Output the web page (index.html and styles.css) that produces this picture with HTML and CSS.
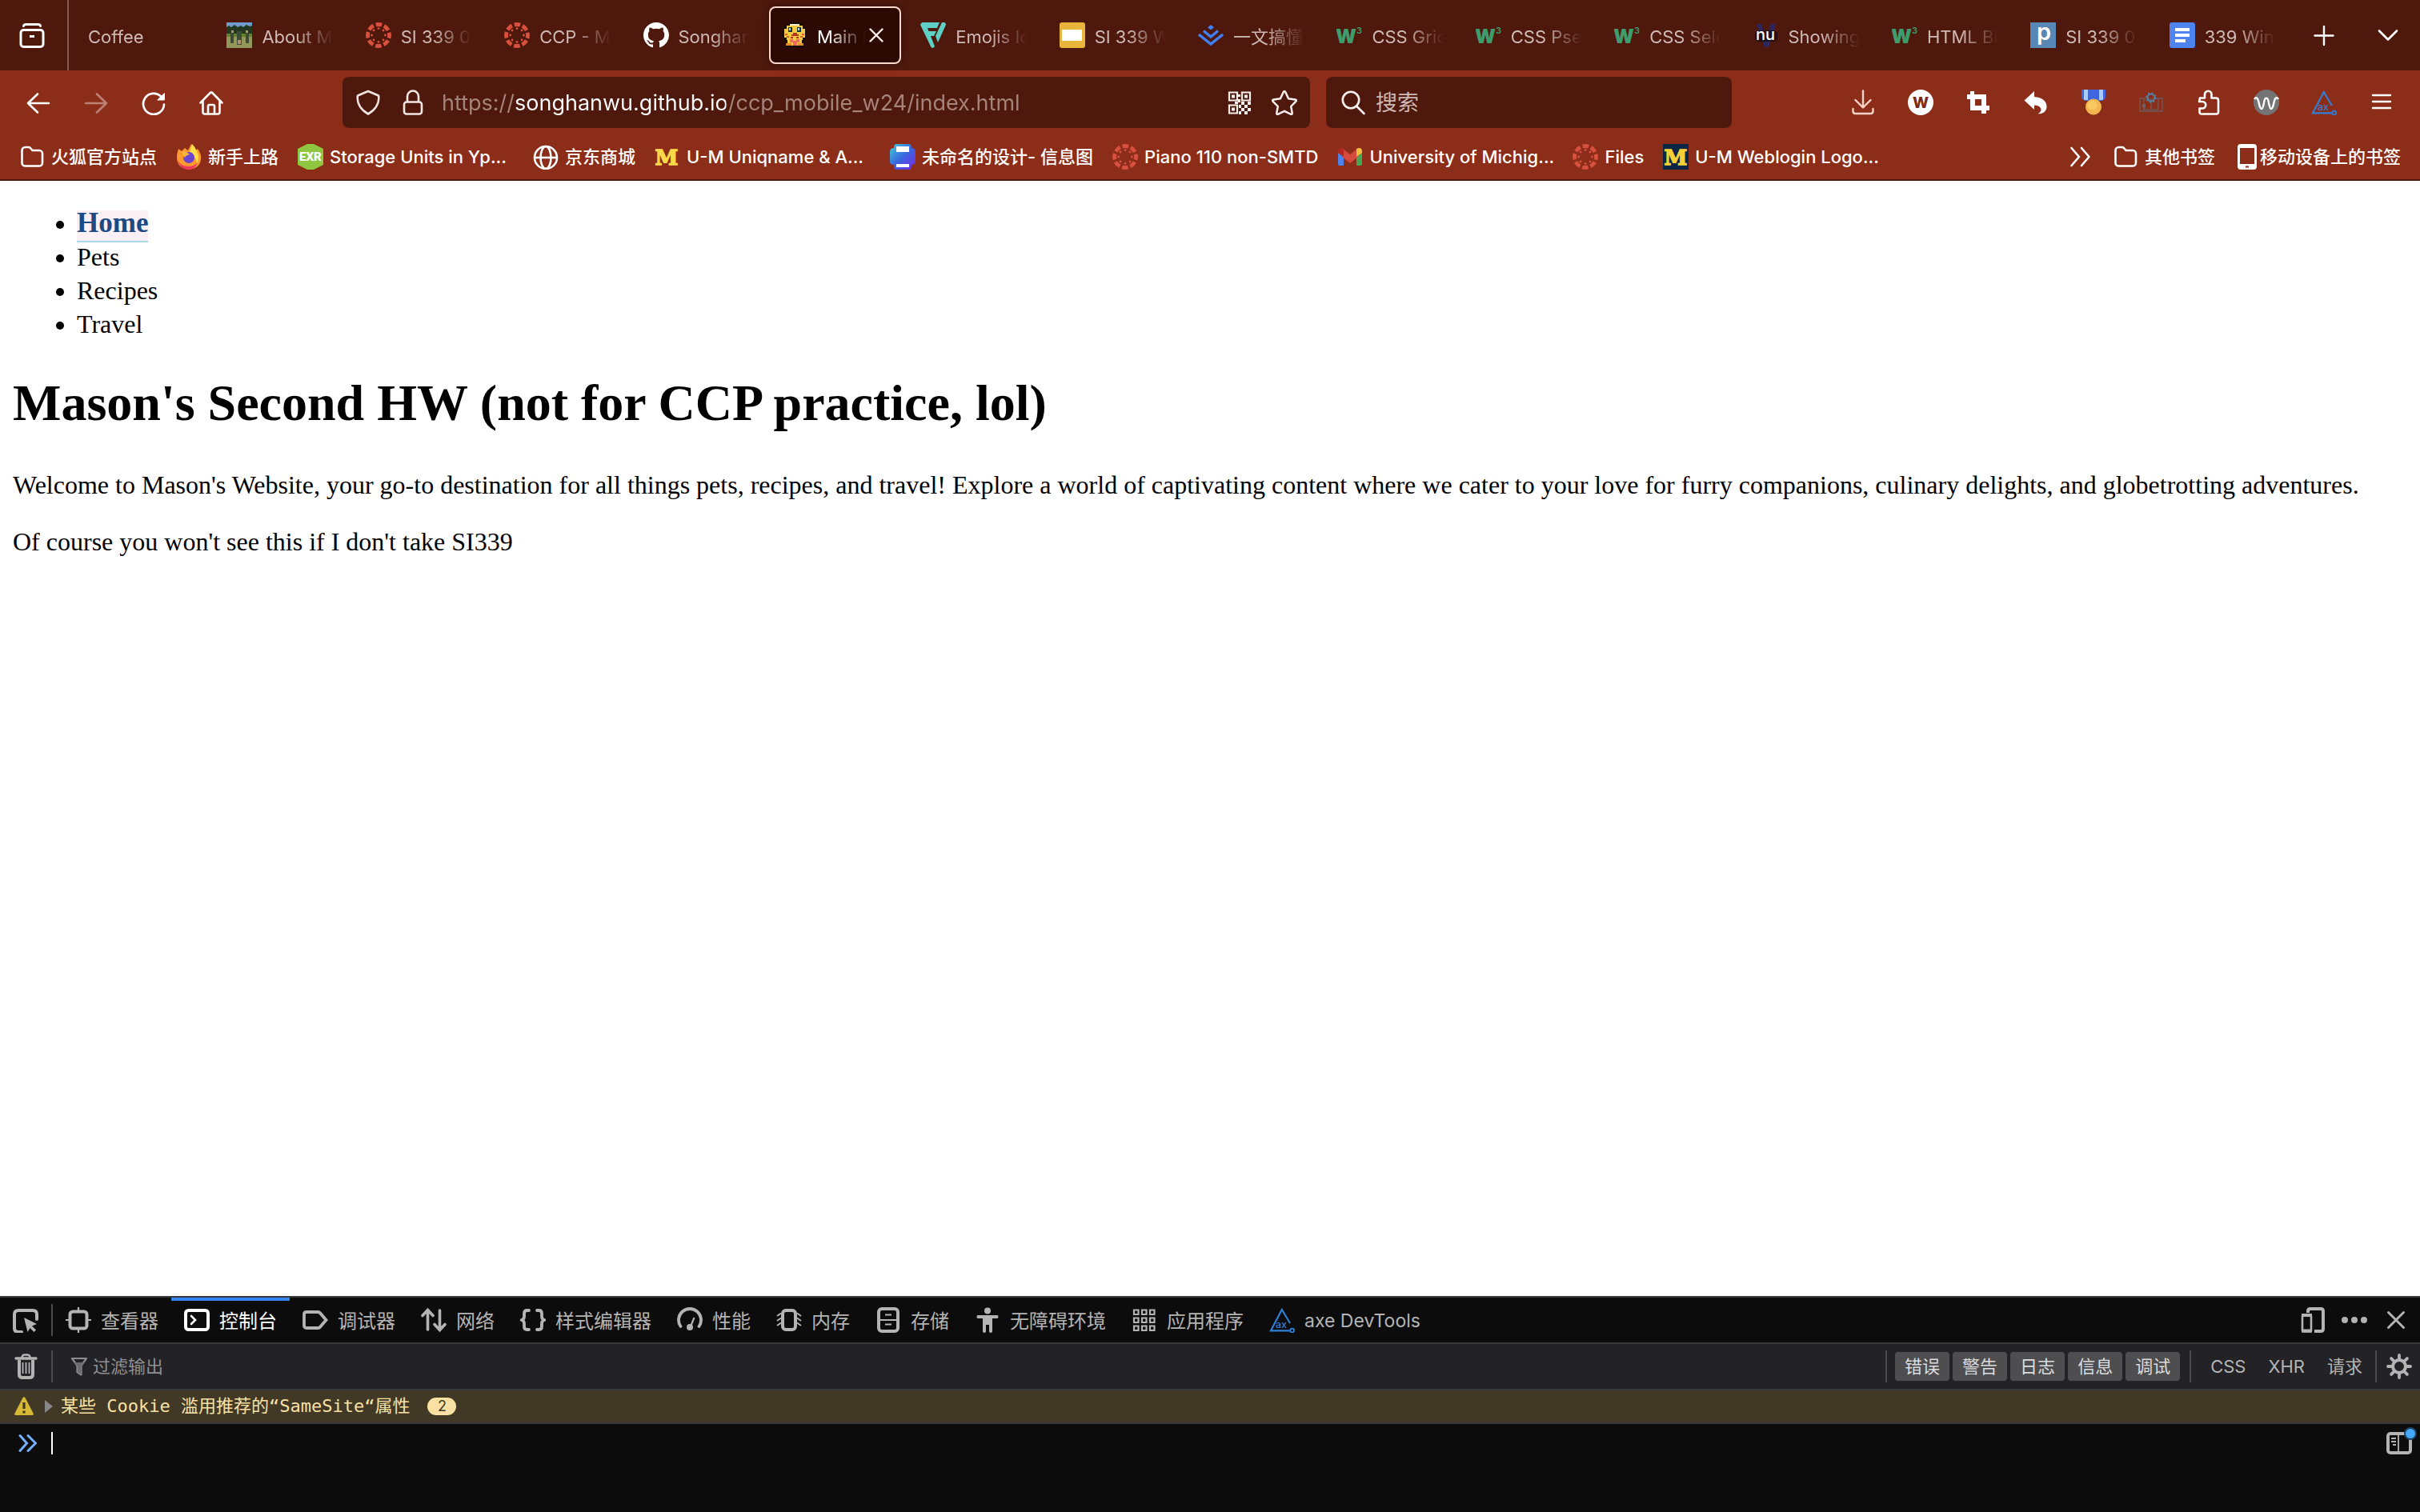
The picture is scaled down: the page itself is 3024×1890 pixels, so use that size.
FILE: index.html
```html
<!DOCTYPE html>
<html lang="zh-CN">
<head>
<meta charset="utf-8">
<meta name="viewport" content="width=device-width, initial-scale=1">
<title>Main</title>
<link rel="stylesheet" href="styles.css">
</head>
<body>
<svg class="sprite" aria-hidden="true">
  <symbol id="canvas" viewBox="0 0 32 32">
    <circle cx="16" cy="16" r="13.500" fill="none" stroke="#d9503f" stroke-width="4.800" stroke-dasharray="7.600 3" stroke-dashoffset="3.800"/>
    <g fill="#d9503f"><circle cx="16" cy="7.600" r="1.400"/><circle cx="16" cy="24.400" r="1.400"/><circle cx="7.600" cy="16" r="1.400"/><circle cx="24.400" cy="16" r="1.400"/><circle cx="22" cy="10" r="1.400"/><circle cx="10" cy="10" r="1.400"/><circle cx="22" cy="22" r="1.400"/><circle cx="10" cy="22" r="1.400"/></g>
  </symbol>
  <symbol id="w3" viewBox="0 0 32 32">
    <text x="-1" y="26" font-family="Inter, sans-serif" font-weight="900" font-size="24" fill="#3f9c6c">W</text>
    <text x="25" y="14" font-family="Inter, sans-serif" font-weight="600" font-size="11" fill="#3f9c6c">3</text>
  </symbol>
  <symbol id="folder" viewBox="0 0 32 32">
    <path d="M3.500 8a4 4 0 0 1 4-4h4.200a3 3 0 0 1 2.200 1l2.600 3h8.500a4 4 0 0 1 4 4v11.500a4 4 0 0 1-4 4h-17.500a4 4 0 0 1-4-4z" fill="none" stroke="#fff" stroke-width="2.600"/>
  </symbol>
  <symbol id="axe" viewBox="0 0 32 32">
    <path d="M26 20 15.800 3 2 29.300h24" fill="none" stroke="#2f7fd6" stroke-width="2.200"/>
    <circle cx="28.700" cy="29" r="2.400" fill="none" stroke="#2f7fd6" stroke-width="1.800"/>
    <text x="8" y="25.500" font-family="Inter, sans-serif" font-weight="500" font-size="12.500" fill="#2f7fd6">ax</text>
  </symbol>
  <symbol id="chevrons" viewBox="0 0 32 32">
    <path d="M4.500 5 14 16 4.500 27M17 5l9.500 11L17 27" fill="none" stroke="currentColor" stroke-width="2.600" stroke-linecap="round" stroke-linejoin="round"/>
  </symbol>
</svg>

<header class="browser">
  <div class="strip">
    <button class="strip-btn recent" type="button" aria-label="近期浏览">
      <svg class="icon" viewBox="0 0 32 32" fill="none" stroke="#fff" stroke-width="3" stroke-linecap="round"><path d="M5.500 4.500Q6 2.500 8.500 2.500h15q2.500 0 3 2"/><rect x="2" y="9.500" width="28" height="21" rx="3.500"/><path d="M13 17.500h6" stroke-linecap="butt"/></svg>
    </button>
    <nav class="tabs" aria-label="标签页">
      <button class="tab" type="button"><span class="tab-label">Coffee</span></button>
      <button class="tab" type="button">
        <svg class="icon" viewBox="0 0 32 32"><path fill="#6f9ccc" d="M0 0h32v7H0z"/><path fill="#24381f" d="M0 6l3-2 3 2 4-3 4 3 4-2 3 2 4-3 4 2 3-1v12H0z"/><path fill="#62822e" d="M0 14h32v6H0z"/><path fill="#93975a" d="M0 18h32v14H0z"/><path fill="#3c4a36" d="M5 13h4v13H5zM13 11h6v17h-6zM24 13h4v13h-4z"/><path fill="#ae9471" d="M14 22h4v5h-4zM6 10h3v3H6zM24 10h3v3h-3z"/></svg>
        <span class="tab-label">About M</span></button>
      <button class="tab" type="button"><svg class="icon"><use href="#canvas"/></svg><span class="tab-label">SI 339 0</span></button>
      <button class="tab" type="button"><svg class="icon"><use href="#canvas"/></svg><span class="tab-label">CCP - M</span></button>
      <button class="tab" type="button">
        <svg class="icon" viewBox="0 0 16 16"><path fill="#fff" d="M8 0C3.580 0 0 3.580 0 8c0 3.540 2.290 6.530 5.470 7.590.4.070.55-.17.55-.38 0-.19-.01-.82-.01-1.490-2.010.37-2.530-.49-2.690-.94-.09-.23-.48-.94-.82-1.130-.28-.15-.68-.52-.01-.53.63-.01 1.080.58 1.230.82.72 1.210 1.870.87 2.330.66.070-.52.28-.87.51-1.070-1.780-.2-3.640-.89-3.640-3.950 0-.87.31-1.590.82-2.150-.08-.2-.36-1.020.08-2.120 0 0 .67-.21 2.200.82.64-.18 1.320-.27 2-.27s1.360.09 2 .27c1.530-1.040 2.200-.82 2.200-.82.44 1.100.16 1.920.08 2.120.51.56.82 1.270.82 2.150 0 3.070-1.870 3.750-3.650 3.950.29.25.54.73.54 1.480 0 1.070-.01 1.930-.01 2.200 0 .21.15.46.55.38A8.010 8.010 0 0 0 16 8c0-4.420-3.580-8-8-8z"/></svg>
        <span class="tab-label">Songhan</span></button>
      <button class="tab active" type="button" aria-current="page">
        <svg class="icon" viewBox="0 0 32 32"><path fill="#120804" d="M10 0h12v2h4v3h3v4h2v10h-2v4h-1v8H4v-8H3v-4H1V9h2V5h3V2h4z"/><path fill="#f6c944" d="M10 2h12v2h4v4h3v11h-3v3H6v-3H3V8h3V4h4zM7 22h18v7H7z"/><path fill="#fff3d0" d="M10 2h12v2H10z"/><path fill="#16323a" d="M8 6h5v6H8zM19 6h5v6h-5z"/><path fill="#b5d8d8" d="M9 7h2v3H9zM20 7h2v3h-2z"/><path fill="#e05a2c" d="M4 14h3v2H4zM25 14h3v2h-3zM6 17h3v2H6zM23 17h3v2h-3z"/><path fill="#b8321c" d="M14 13h5v2h2v2h-9v-2h2zM11 18h3v2h-3zM18 18h3v2h-3z"/><path fill="#f06a5c" d="M10 21h4v2h4v-2h4v4h-3v4h-5v-4h-4z"/><path fill="#e88a25" d="M5 26h7v3H5zM20 26h7v3h-7z"/></svg>
        <span class="tab-label">Main P</span>
        <svg class="close" viewBox="0 0 18 18"><path d="M1.500 1.500l15 15m0-15l-15 15" stroke="#fdeee9" stroke-width="2.400" stroke-linecap="round"/></svg>
      </button>
      <button class="tab" type="button"><svg class="icon" viewBox="0 0 32 32"><path fill="#5fd0c6" d="M2 0h22L21 7H9l1.500 4H20l-3 6h-4l5 13q-3 4-5 0L0 3zM27 0h3q3 1 1.500 4L22 25l-3-8z"/></svg><span class="tab-label">Emojis Ic</span></button>
      <button class="tab" type="button"><svg class="icon" viewBox="0 0 32 32"><rect width="32" height="32" rx="3" fill="#e8b43c"/><rect x="3" y="9" width="25" height="14" fill="#fff"/></svg><span class="tab-label">SI 339 W</span></button>
      <button class="tab" type="button"><svg class="icon" viewBox="0 0 32 32" fill="none" stroke="#3f80f6" stroke-width="3.400"><path d="M1 15l15 12 15-12M7 10.500l9 7.500 9-7.500"/><path fill="#3f80f6" stroke="none" d="M16 3l4 3.200-4 3.300-4-3.300z"/></svg><span class="tab-label">一文搞懂</span></button>
      <button class="tab" type="button"><svg class="icon"><use href="#w3"/></svg><span class="tab-label">CSS Grid</span></button>
      <button class="tab" type="button"><svg class="icon"><use href="#w3"/></svg><span class="tab-label">CSS Pse</span></button>
      <button class="tab" type="button"><svg class="icon"><use href="#w3"/></svg><span class="tab-label">CSS Sele</span></button>
      <button class="tab" type="button"><svg class="icon" viewBox="0 0 32 32"><path fill="#2b2560" d="M4 2h6l6 18 6-18h6L19 31h-5z"/><rect x="2" y="10" width="28" height="14" rx="5" fill="#1a0d10" opacity=".8"/><text x="3" y="22" font-family="Inter, sans-serif" font-weight="500" font-size="20" fill="#fff">nu</text></svg><span class="tab-label">Showing</span></button>
      <button class="tab" type="button"><svg class="icon"><use href="#w3"/></svg><span class="tab-label">HTML Bl</span></button>
      <button class="tab" type="button"><svg class="icon" viewBox="0 0 32 32"><rect width="32" height="32" fill="#5787b5"/><text x="8" y="22" font-family="Inter, sans-serif" font-weight="600" font-size="29" fill="#fff">p</text></svg><span class="tab-label">SI 339 0</span></button>
      <button class="tab" type="button"><svg class="icon" viewBox="0 0 32 32"><rect width="32" height="32" rx="3" fill="#4f83ee"/><path d="M7 9h18M7 16h18M7 23h13" stroke="#fff" stroke-width="4"/></svg><span class="tab-label">339 Win</span></button>
    </nav>
    <button class="strip-btn" type="button" aria-label="打开新标签页"><svg class="icon" viewBox="0 0 32 32"><path d="M16 5v23M4.500 16.500h23" stroke="#fff" stroke-width="2.400" stroke-linecap="round"/></svg></button>
    <button class="strip-btn" type="button" aria-label="列出标签页"><svg class="icon" viewBox="0 0 32 32"><path d="M5 10.500l11 11 11-11" fill="none" stroke="#fff" stroke-width="2.600" stroke-linecap="round" stroke-linejoin="round"/></svg></button>
  </div>

  <div class="toolbar">
    <div class="tools">
      <button type="button" class="tool" aria-label="后退"><svg class="icon" viewBox="0 0 32 32"><path d="M29 17H3M15 5.500 3 17l12 11.500" fill="none" stroke="#fff" stroke-width="2.600" stroke-linecap="round" stroke-linejoin="round"/></svg></button>
      <button type="button" class="tool dim" aria-label="前进"><svg class="icon" viewBox="0 0 32 32"><path d="M3 17h26M17 5.500 29 17 17 28.500" fill="none" stroke="#fff" stroke-width="2.600" stroke-linecap="round" stroke-linejoin="round"/></svg></button>
      <button type="button" class="tool" aria-label="刷新"><svg class="icon" viewBox="0 0 32 32"><path d="M25.500 9A13 13 0 1 0 29 18.500" fill="none" stroke="#fff" stroke-width="2.700" stroke-linecap="round"/><path fill="#fff" d="M29 4.500q1-.5 1 .8V12q0 1.500-1.500 1.500h-7.200q-1.500 0-.6-1z"/></svg></button>
      <button type="button" class="tool" aria-label="主页"><svg class="icon" viewBox="0 0 32 32"><path d="M2.500 16.500 14.700 4q1.300-1.200 2.600 0l12.200 12.500M5.500 14v14q0 2.500 2.500 2.500h16q2.500 0 2.500-2.500V14M12 30V21q0-2 2-2h4q2 0 2 2v9" fill="none" stroke="#fff" stroke-width="2.600" stroke-linecap="round"/></svg></button>
    </div>
    <div class="field address">
      <svg class="icon" viewBox="0 0 32 32"><path d="M16 2l13 5.500c1.500 9-3.500 17.500-13 23C6.500 25 1.500 16.500 3 7.500z" fill="none" stroke="#f3e6e2" stroke-width="2.600" stroke-linejoin="round"/></svg>
      <svg class="icon" viewBox="0 0 32 32" fill="none" stroke="#f3e6e2" stroke-width="2.600"><rect x="5" y="15.500" width="22" height="15" rx="3"/><path d="M9 15V8.500a7 7 0 0 1 14 0V15"/></svg>
      <input class="url" type="text" aria-label="地址" value="https://songhanwu.github.io/ccp_mobile_w24/index.html">
      <svg class="icon" viewBox="0 0 32 32"><g fill="none" stroke="#f7efec" stroke-width="2.200"><path d="M3 3.500h10v10H3zM19 3.500h10v10H19zM3 19.500h10v10H3z"/></g><path fill="#f7efec" d="M6 6.500h4v4H6zM22 6.500h4v4h-4zM6 22.500h4v4H6zM14 6h3v3h-3zM14 12h3v4h-3zM10 15h4v3h-4zM18 15h4v4h-4zM26 15h4v4h-4zM22 19h4v4h-4zM18 23h4v4h-4zM26 23h4v4h-4zM15 19h3v4h-3zM15 27h3v4h-3zM22 27h4v4h-4z"/></svg>
      <svg class="icon" viewBox="0 0 32 32"><path d="M14.700 3.200q1.300-2.400 2.600 0l3.800 8 8.300 1.200q2.400.5.800 2.400l-6 6.200 1.500 8.200q.2 2.400-2 1.500L16 26.800l-7.700 3.900q-2.200.9-2-1.500l1.500-8.200-6-6.200q-1.600-1.900.8-2.400l8.300-1.200z" fill="none" stroke="#f7efec" stroke-width="2.500" stroke-linejoin="round"/></svg>
    </div>
    <div class="field search">
      <svg class="icon" viewBox="0 0 32 32"><path d="M20 20.500l9.500 9.500" stroke="#f7efec" stroke-width="2.600" stroke-linecap="round"/><circle cx="13" cy="13" r="10.200" fill="none" stroke="#f7efec" stroke-width="2.600"/></svg>
      <input type="search" placeholder="搜索" aria-label="搜索">
    </div>
    <div class="tools end">
      <button type="button" class="tool" aria-label="下载"><svg class="icon" viewBox="0 0 32 32"><path d="M16 1.500v20M6.500 13 16 22.500 25.500 13M3.500 24v3q0 3 3 3h19q3 0 3-3v-3" fill="none" stroke="#fbd3c8" stroke-width="2.400" stroke-linecap="round" stroke-linejoin="round"/></svg></button>
      <button type="button" class="tool" aria-label="W"><svg class="icon" viewBox="0 0 32 32"><circle cx="16" cy="16" r="16" fill="#fff"/><text x="16" y="23" text-anchor="middle" font-family="Inter, sans-serif" font-weight="800" font-size="19" fill="#7c2a18">W</text></svg></button>
      <button type="button" class="tool" aria-label="裁剪"><svg class="icon" viewBox="0 0 32 32"><path fill="#fff" fill-rule="evenodd" d="M6 2h5v4h15v14h4v6h-4v4h-6v-4H6V12H2V6h4zM12 12v8h8v-8z"/></svg></button>
      <button type="button" class="tool" aria-label="返回"><svg class="icon" viewBox="0 0 32 32"><path fill="#fff" d="M14 2v7c10 .5 16 6 15.500 13-.3 5-4.500 8.500-11 8.300 5.500-2 6.500-10.300-4.500-10.800v5.500L1.500 13.500z"/></svg></button>
      <button type="button" class="tool" aria-label="奖牌"><svg class="icon" viewBox="0 0 32 32"><path fill="#3f66e0" d="M1 0h30v9q0 3-5 5H6q-5-2-5-5z"/><path fill="#a9cdfb" d="M4 0h5v13H4zM23 0h5v13h-5z"/><circle cx="16" cy="21.500" r="10" fill="#f3b64f"/><circle cx="14.500" cy="19.500" r="6" fill="#f9c960"/></svg></button>
      <button type="button" class="tool" aria-label="阅读"><svg class="icon" viewBox="0 0 32 32" fill="none"><path d="M2 11h5v16H2zM2 27h28V11h-5M7 11q5-2 9 2v14M25 11q-5-2-9 2M7 25q5-1 9 2 4-3 9-2M25 11v14" stroke="#765048" stroke-width="1.800"/><path d="M5 18h4v5H5z" fill="#6d5f5c"/><circle cx="16" cy="10" r="4.500" stroke="#4c87ad" stroke-width="1.800"/><circle cx="16" cy="10" r="6" stroke="#4c87ad" stroke-width="1.600" stroke-dasharray="2 2.700"/></svg></button>
      <button type="button" class="tool" aria-label="扩展"><svg class="icon" viewBox="0 0 32 32"><path d="M5 10.500h6V6a4 4 0 0 1 8.500 0v4.500H25q3 0 3 3V28q0 2.500-2.500 2.500H7Q4.500 30.500 4.500 28v-4.500H8a4 4 0 0 0 0-8.500H4z" fill="none" stroke="#fff" stroke-width="2.600" stroke-linejoin="round"/></svg></button>
      <button type="button" class="tool" aria-label="波形"><svg class="icon" viewBox="0 0 32 32"><circle cx="16" cy="16" r="16" fill="#747474"/><path d="M1 12c2-3 4-2 5 2 1.500 6 2 10 4 10s2.500-5 3.500-10c1-4.500 4-4.500 5 0 1 5 1.500 10 3.500 10s2.500-4 4-10c1-4 3-5 5-2" fill="none" stroke="#fff" stroke-width="2.400"/></svg></button>
      <button type="button" class="tool" aria-label="axe"><svg class="icon"><use href="#axe"/></svg></button>
      <button type="button" class="tool" aria-label="菜单"><svg class="icon" viewBox="0 0 32 32"><path d="M5 7h22M5 15h22M5 23h22" stroke="#fff" stroke-width="2.500" stroke-linecap="round"/></svg></button>
    </div>
  </div>

  <nav class="bookmarks" aria-label="书签">
    <a href="#"><svg class="icon"><use href="#folder"/></svg><span>火狐官方站点</span></a>
    <a href="#"><svg class="icon" viewBox="0 0 32 32"><path fill="#ff9a2e" d="M3 6l4 3 4-4q2 2 4 3l4-8q4 4 6 8l2-2q5 7 4 13-1 11-15 13Q2 30 1 18 1 11 3 6z"/><path fill="#ffdf4a" d="M20 0q4 4 6 9 4 9 0 15-2-11-9-14z"/><path fill="#f0375f" d="M2 19q3 9 13 9 8 0 12-5-3 9-12 9Q4 31 2 19z"/><circle cx="16" cy="17" r="7" fill="#6b45cf"/><path fill="#ffb43a" d="M7 9q5 0 10 4-5 1-6 4-3-2-4-8z"/></svg><span>新手上路</span></a>
    <a href="#"><svg class="icon" viewBox="0 0 32 32"><path fill="#8fc740" d="M12 0h8l12 6v20l-12 6h-8L0 26V6z"/><text x="16" y="21" text-anchor="middle" font-family="Roboto, sans-serif" font-weight="900" font-size="15" fill="#fff">EXR</text></svg><span class="cut">Storage Units in Yp...</span></a>
    <a href="#"><svg class="icon" viewBox="0 0 32 32" fill="none" stroke="#fff" stroke-width="2.600"><circle cx="16" cy="17" r="14"/><ellipse cx="16" cy="17" rx="6.500" ry="14"/><path d="M2 17h28"/></svg><span>京东商城</span></a>
    <a href="#"><svg class="icon" viewBox="0 0 32 32"><text x="15" y="26" text-anchor="middle" font-family="DejaVu Serif, serif" font-weight="700" font-size="26" fill="#f8d94a" stroke="#f8d94a" stroke-width="1.400">M</text></svg><span class="cut">U-M Uniqname &amp; A...</span></a>
    <a href="#"><svg class="icon" viewBox="0 0 32 32"><defs><linearGradient id="g" x1="0" y1="0" x2="1" y2="1"><stop offset="0" stop-color="#3fd0d4"/><stop offset=".5" stop-color="#3a66e0"/><stop offset="1" stop-color="#7a28e0"/></linearGradient></defs><path fill="url(#g)" d="M8 0h16q3 0 3 5 5 0 5 5v12q0 4-5 4 0 6-3 6H8q-3 0-3-6-5 0-5-4V10q0-5 5-5 0-5 3-5z"/><path fill="#fff" d="M8 3h16v7H8zM8 25h16v4H8z"/></svg><span>未命名的设计- 信息图</span></a>
    <a href="#"><svg class="icon"><use href="#canvas"/></svg><span>Piano 110 non-SMTD</span></a>
    <a href="#"><svg class="icon" viewBox="0 0 32 32"><path fill="#4f83ee" d="M1 11l7 5v11H3q-2 0-2-2z"/><path fill="#4aa657" d="M31 11l-7 5v11h5q2 0 2-2z"/><path fill="#d64a3d" d="M6 5l10 8 10-8v11l-10 8-10-8z"/><path fill="#b3281f" d="M1 8q1-5 7-2v10l-7-5z"/><path fill="#f3bc3d" d="M31 8q-1-5-7-2v10l7-5z"/></svg><span class="cut">University of Michig...</span></a>
    <a href="#"><svg class="icon"><use href="#canvas"/></svg><span>Files</span></a>
    <a href="#"><svg class="icon" viewBox="0 0 32 32"><path fill="#0b2545" d="M0 0h32v32H0z"/><text x="16" y="26" text-anchor="middle" font-family="DejaVu Serif, serif" font-weight="700" font-size="26" fill="#f8d035" stroke="#f8d035" stroke-width="1.400">M</text></svg><span class="cut">U-M Weblogin Logo...</span></a>
    <button type="button" class="more" aria-label="显示更多书签"><svg class="icon"><use href="#chevrons"/></svg></button>
    <a href="#"><svg class="icon"><use href="#folder"/></svg><span>其他书签</span></a>
    <a href="#" class="tight"><svg class="icon" viewBox="0 0 32 32"><path fill="#fff" fill-rule="evenodd" d="M8 0h16q4 0 4 4v24q0 4-4 4H8q-4 0-4-4V4q0-4 4-4zM7 5v20h18V5zM14 27.500v2h4v-2z"/></svg><span>移动设备上的书签</span></a>
  </nav>
</header>

<main class="page">
  <ul>
    <li><a class="current" href="#">Home</a></li>
    <li><a href="#">Pets</a></li>
    <li><a href="#">Recipes</a></li>
    <li><a href="#">Travel</a></li>
  </ul>
  <h1>Mason's Second HW (not for CCP practice, lol)</h1>
  <p>Welcome to Mason's Website, your go-to destination for all things pets, recipes, and travel! Explore a world of captivating content where we cater to your love for furry companions, culinary delights, and globetrotting adventures.</p>
  <p>Of course you won't see this if I don't take SI339</p>
</main>

<section class="devtools" aria-label="开发者工具">
  <div class="dt-bar dt-tabs">
    <button type="button" class="dt-btn pick" aria-label="选取元素"><svg class="icon" viewBox="0 0 32 32"><path d="M11 30H7q-5 0-5-5V8q0-5 5-5h18q5 0 5 5v6" transform="translate(0 1)" fill="none" stroke="currentColor" stroke-width="4" stroke-linecap="round"/><path fill="currentColor" d="M14 13l16 8-6 2.500 5 5-2.500 2.500-5-5L18.500 31z"/></svg></button>
    <span class="rule"></span>
    <button type="button" class="dt-tab"><svg class="icon" viewBox="0 0 32 32" fill="none" stroke="currentColor"><rect x="5.500" y="5.500" width="21" height="21" rx="3.500" stroke-width="4"/><path d="M16 0v5M16 27v5M0 16h5M27 16h5" stroke-width="2.200"/></svg><span>查看器</span></button>
    <button type="button" class="dt-tab on"><svg class="icon" viewBox="0 0 32 32" fill="none" stroke="currentColor" stroke-width="4"><rect x="2" y="4" width="28" height="24" rx="3.500"/><path d="M9 11l5 5-5 5" stroke-width="2.600" stroke-linecap="round"/></svg><span>控制台</span></button>
    <button type="button" class="dt-tab"><svg class="icon" viewBox="0 0 32 32"><path d="M5 6h14.500q1.500 0 2.500 1.200L29.500 16 22 24.800Q21 26 19.500 26H5q-3 0-3-3V9q0-3 3-3z" fill="none" stroke="currentColor" stroke-width="3.800"/></svg><span>调试器</span></button>
    <button type="button" class="dt-tab"><svg class="icon" viewBox="0 0 32 32"><path d="M8.500 28V4.500M2 10.500l6.500-7 6.500 7M23.500 4v23.500M17 21.500l6.500 7 6.500-7" fill="none" stroke="currentColor" stroke-width="3.600" stroke-linecap="round"/></svg><span>网络</span></button>
    <button type="button" class="dt-tab"><svg class="icon" viewBox="0 0 32 32"><path d="M11 4H8.500Q5 4 5 8v3.500Q5 15 2 16q3 1 3 4.500V24q0 4 3.500 4H11M21 4h2.500Q27 4 27 8v3.500q0 3.500 3 4.500-3 1-3 4.500V24q0 4-3.500 4H21" fill="none" stroke="currentColor" stroke-width="3.800" stroke-linecap="round"/></svg><span>样式编辑器</span></button>
    <button type="button" class="dt-tab"><svg class="icon" viewBox="0 0 32 32"><path d="M4.500 24A14 14 0 1 1 27.500 24" fill="none" stroke="currentColor" stroke-width="3.800" stroke-linecap="round"/><path d="M17 24l4.500-11" stroke="currentColor" stroke-width="2.200"/><circle cx="16" cy="25" r="4" fill="currentColor"/></svg><span>性能</span></button>
    <button type="button" class="dt-tab"><svg class="icon" viewBox="0 0 32 32" fill="none" stroke="currentColor"><rect x="8" y="4" width="16" height="24" rx="4" stroke-width="4"/><path d="M6 7.500 1 11M6 13.500 1 17M6 19.500 1 23M26 7.500l5 3.500M26 13.500l5 3.500M26 19.500l5 3.500" stroke-width="2"/></svg><span>内存</span></button>
    <button type="button" class="dt-tab"><svg class="icon" viewBox="0 0 32 32" fill="none" stroke="currentColor" stroke-width="4"><rect x="4" y="2" width="24" height="28" rx="4"/><path d="M4 16h24M12 9.500h8M12 21.500h8" stroke-width="2.200"/></svg><span>存储</span></button>
    <button type="button" class="dt-tab"><svg class="icon" viewBox="0 0 32 32" fill="currentColor"><circle cx="16" cy="4.500" r="4"/><path d="M4 10h24q1.500 0 1.500 2t-1.500 2h-6v16q0 2-2 2t-2-2v-8h-4v8q0 2-2 2t-2-2V14H4q-1.500 0-1.500-2T4 10z"/></svg><span>无障碍环境</span></button>
    <button type="button" class="dt-tab"><svg class="icon" viewBox="0 0 32 32" fill="none" stroke="currentColor" stroke-width="2.200"><path d="M3 3.500h5.500v5.500H3zM13 3.500h5.500v5.500H13zM23 3.500h5.500v5.500H23zM3 13.500h5.500v5.500H3zM13 13.500h5.500v5.500H13zM23 13.500h5.500v5.500H23zM3 23.500h5.500V29H3zM13 23.500h5.500V29H13zM23 23.500h5.500V29H23z"/></svg><span>应用程序</span></button>
    <button type="button" class="dt-tab latin"><svg class="icon"><use href="#axe"/></svg><span>axe DevTools</span></button>
    <div class="dt-end">
      <button type="button" class="dt-btn" aria-label="响应式设计模式"><svg class="icon" viewBox="0 0 32 32" fill="none" stroke="currentColor"><path d="M10 7V5q0-3 3-3h13q3 0 3 3v22q0 3-3 3h-8" stroke-width="4"/><rect x="3" y="10" width="11" height="20.500" rx="1.500" stroke-width="2.600"/><path d="M2 10h13M2 29.500h13" stroke-width="4"/></svg></button>
      <button type="button" class="dt-btn" aria-label="更多选项"><svg class="icon" viewBox="0 0 32 32" fill="currentColor"><circle cx="4" cy="16" r="4"/><circle cx="16" cy="16" r="4"/><circle cx="28" cy="16" r="4"/></svg></button>
      <button type="button" class="dt-btn" aria-label="关闭"><svg class="icon" viewBox="0 0 32 32"><path d="M6.500 6.500l19 19m0-19l-19 19" stroke="currentColor" stroke-width="3" stroke-linecap="round"/></svg></button>
    </div>
  </div>

  <div class="dt-bar dt-filter">
    <button type="button" class="dt-btn pick" aria-label="清空"><svg class="icon" viewBox="0 0 32 32" fill="none" stroke="currentColor"><path d="M4 6h25" stroke-width="3.400" stroke-linecap="round"/><path d="M11.500 5q0-3.500 3.500-3.500h3q3.500 0 3.500 3.500" stroke-width="2.400"/><path d="M8 8v18q0 4 4 4h9q4 0 4-4V8" stroke-width="4"/><path d="M12.500 11v14M16.500 11v14M20.500 11v14" stroke-width="1.800"/></svg></button>
    <span class="rule"></span>
    <label class="filter">
      <svg class="funnel" viewBox="0 0 22 24"><path d="M2 2h18l-6.500 9v11.500L8.500 19v-8z" fill="none" stroke="#8d8d90" stroke-width="2.200" stroke-linejoin="round"/><path d="M5 7h12l-3.500 5v10L9 19v-7z" fill="#6b6b70"/></svg>
      <input type="text" placeholder="过滤输出" aria-label="过滤输出">
    </label>
    <div class="chips">
      <span class="rule lead"></span>
      <button type="button" class="chip on">错误</button>
      <button type="button" class="chip on">警告</button>
      <button type="button" class="chip on">日志</button>
      <button type="button" class="chip on">信息</button>
      <button type="button" class="chip on">调试</button>
      <span class="rule mid"></span>
      <button type="button" class="chip">CSS</button>
      <button type="button" class="chip">XHR</button>
      <button type="button" class="chip">请求</button>
      <span class="rule"></span>
    </div>
    <button type="button" class="dt-btn gear" aria-label="控制台设置"><svg class="icon" viewBox="0 0 32 32" fill="none" stroke="currentColor"><circle cx="16" cy="16" r="8" stroke-width="4"/><path d="M16 2v5M16 25v5M2 16h5M25 16h5M6.100 6.100l3.500 3.500M22.400 22.400l3.500 3.500M6.100 25.900l3.500-3.500M22.400 9.600l3.500-3.500" stroke-width="3.800" stroke-linecap="round"/></svg></button>
  </div>

  <div class="warning">
    <svg class="tri" viewBox="0 0 24 24"><path fill="#d8b935" d="M10.300 1.500q1.700-2.500 3.400 0L23.500 20.500q1 2.500-1.500 2.500H2q-2.500 0-1.500-2.500z"/><path d="M12 7v8M12 17.500v3" stroke="#413825" stroke-width="3.200"/></svg>
    <svg class="arrow" viewBox="0 0 10 16"><path fill="#87878a" d="M0 0l10 8-10 8z"/></svg>
    <span class="msg">某些 Cookie 滥用推荐的“SameSite“属性</span>
    <span class="count">2</span>
  </div>

  <div class="prompt">
    <svg class="ps" viewBox="0 0 24 24"><path d="M3 2.500 11.500 12 3 21.500M13 2.500l9.500 9.500-9.500 9.500" fill="none" stroke="#75b0ff" stroke-width="3" stroke-linecap="round"/></svg>
    <span class="caret"></span>
    <input type="text" aria-label="控制台输入">
    <button type="button" class="dt-btn" aria-label="多行编辑器"><svg class="icon" viewBox="0 0 32 32" fill="none" stroke="currentColor"><rect x="2" y="4" width="28" height="24" rx="3" stroke-width="4"/><path d="M15 4v24M6 10h6M6 14h6M8 18h4" stroke-width="1.800"/></svg><span class="dot"></span></button>
  </div>
</section>
</body>
</html>
```
FILE: styles.css
```css
*, *::before, *::after { box-sizing: border-box; }

:root {
  --ui: Inter, "Noto Sans CJK SC", sans-serif;
  --frame: #4f180d;
  --toolbar: #8c2d19;
  --line: #38383d;
  --dt-text: #b4b4b4;
}

body {
  margin: 0;
  min-height: 100vh;
  display: flex;
  flex-direction: column;
  background: #fff;
  font-family: var(--ui);
  font-size: 22px;
}

button, input {
  margin: 0;
  padding: 0;
  border: 0;
  background: none;
  color: inherit;
  font: inherit;
  outline: none;
}

.sprite { position: absolute; width: 0; height: 0; }
.icon { flex: none; display: block; width: 32px; height: 32px; }

/* Tab strip */
.strip { display: flex; height: 88px; background: var(--frame); }
.strip-btn { flex: none; width: 80px; display: grid; place-items: center; }
.strip-btn.recent { width: 86px; padding-right: 4px; border-right: 2px solid #84594f; }
.tabs {
  flex: 1;
  min-width: 0;
  display: grid;
  grid-auto-flow: column;
  grid-auto-columns: minmax(0, 1fr);
  padding-left: 4px;
}
.tab {
  min-width: 0;
  display: flex;
  align-items: center;
  gap: 12px;
  margin: 8px 4px;
  padding: 0 16px;
  color: #cfbab5;
  text-align: left;
}
.tab-label {
  flex: 1;
  min-width: 0;
  padding-top: 4px;
  line-height: 32px;
  white-space: nowrap;
  overflow: hidden;
  -webkit-mask-image: linear-gradient(to left, transparent 0, #000 48px);
  mask-image: linear-gradient(to left, transparent 0, #000 48px);
}
.tab.active {
  padding: 0 22px 0 16px;
  border-radius: 8px;
  background: #2c0a03;
  box-shadow: inset 0 0 0 2px #fcd8cd, 0 0 8px rgba(0, 0, 0, .4);
  color: #fff;
}
.close { flex: none; width: 18px; height: 18px; margin-left: -8px; }

/* Navigation toolbar */
.toolbar {
  display: grid;
  grid-template-columns: auto minmax(0, 128fr) minmax(0, 1209fr) 20px minmax(0, 507fr) minmax(0, 128fr) auto;
  align-items: center;
  height: 80px;
  padding: 0 12px;
  background: var(--toolbar);
}
.tools { display: flex; }
.tools.end { grid-column: 7; }
.tool { width: 72px; height: 64px; display: grid; place-items: center; }
.dim { opacity: .4; }
.field {
  min-width: 0;
  height: 64px;
  display: flex;
  align-items: center;
  border-radius: 8px;
  background: var(--frame);
  font-size: 27px;
}
.field input { flex: 1; min-width: 0; height: 40px; }
.address { grid-column: 3; gap: 24px; padding: 0 16px; }
.address .url {
  margin-left: -4px;
  color: transparent;
  background: linear-gradient(90deg, #a5847c 0 91px, #fff 91px 355px, #a5847c 355px);
  -webkit-background-clip: text;
  background-clip: text;
}
.search { grid-column: 5; gap: 12px; padding: 0 18px; }
.search input::placeholder { color: #cdb8b2; opacity: 1; }

/* Bookmarks */
.bookmarks {
  display: flex;
  align-items: center;
  gap: 24px;
  height: 58px;
  padding: 0 24px;
  border-bottom: 2px solid var(--frame);
  background: var(--toolbar);
  color: #fff;
  font-weight: 500;
  line-height: 32px;
  white-space: nowrap;
}
.bookmarks a { display: flex; gap: 8px; color: inherit; text-decoration: none; }
.bookmarks .tight { gap: 0; }
.bookmarks .cut { width: 230px; }
.more { margin-left: auto; }

/* Web page */
.page {
  flex: 1;
  padding: 0 16px;
  color: #000;
  font-family: "Liberation Serif", serif;
  font-size: 32px;
}
.page ul { margin: 32px 0 41px; padding-left: 80px; line-height: 42px; }
.page a { color: inherit; text-decoration: none; }
.page a.current {
  display: inline-block;
  margin-bottom: -4px;
  padding-bottom: 7px;
  border-bottom: 2px solid #b0d8e4;
  background: #fcf0f5;
  color: #1d4a85;
  font-size: 35px;
  font-weight: 700;
  line-height: 31px;
}
.page h1 { margin: 0 0 46px; font-size: 64px; line-height: 74px; }
.page p { margin: 0 0 32px; line-height: 39px; }

/* Developer tools */
.devtools { flex: none; border-top: 2px solid var(--line); background: #0c0c0d; color: var(--dt-text); }
.dt-bar { display: flex; align-items: center; height: 58px; border-bottom: 2px solid var(--line); }
.dt-btn { position: relative; flex: none; display: block; width: 32px; }
.pick { margin: 0 16px; }
.rule { flex: none; width: 2px; height: 40px; background: #4a4a4f; }
.dt-tab {
  flex: none;
  display: flex;
  align-items: center;
  gap: 12px;
  height: 56px;
  padding: 0 16px;
  font-size: 24px;
  white-space: nowrap;
}
.dt-tab span { padding-bottom: 2px; }
.dt-tab.latin { font-size: 23px; }
.dt-tab.latin span { padding: 2px 0 0; }
.dt-tab.on { color: #fff; box-shadow: inset 0 4px #3584f5; }
.dt-end { display: flex; gap: 20px; margin-left: auto; padding-right: 14px; }

.dt-filter { background: #232327; }
.filter { flex: 1; display: flex; align-items: center; gap: 6px; padding-left: 22px; }
.funnel { flex: none; width: 22px; height: 24px; }
.filter input { flex: 1; height: 32px; }
.filter input::placeholder { color: #8f8f92; opacity: 1; }
.chips { display: flex; align-items: center; gap: 4px; }
.chip { height: 36px; padding: 0 12px; border-radius: 4px; line-height: 32px; }
.chip.on { background: #4e4e51; color: #dcdcde; }
.rule.lead { margin-right: 6px; }
.rule.mid { margin: 0 8px; }
.gear { margin: 0 10px 0 12px; }

.warning {
  display: flex;
  align-items: center;
  height: 42px;
  padding-left: 18px;
  border-bottom: 2px solid var(--line);
  background: #413825;
  color: #f9e1a4;
  font-family: "DejaVu Sans Mono", "Noto Sans CJK SC", monospace;
  line-height: 32px;
}
.tri { width: 24px; height: 24px; margin-right: 14px; }
.arrow { width: 10px; height: 16px; margin-right: 10px; }
.count {
  width: 36px;
  height: 22px;
  margin-left: 22px;
  border-radius: 11px;
  background: #f9e1a4;
  color: #413825;
  font-family: var(--ui);
  font-size: 18px;
  line-height: 22px;
  text-align: center;
}
.prompt { display: flex; align-items: center; height: 110px; padding: 0 10px 62px 22px; }
.ps { width: 24px; height: 24px; margin-right: 18px; }
.caret { width: 2px; height: 28px; background: #fff; }
.prompt input { flex: 1; height: 28px; }
.dot {
  position: absolute;
  top: -2px;
  right: -4px;
  width: 12px;
  height: 12px;
  border-radius: 50%;
  background: #45a9f9;
  box-shadow: 0 0 0 2px #1d4263;
}
```
